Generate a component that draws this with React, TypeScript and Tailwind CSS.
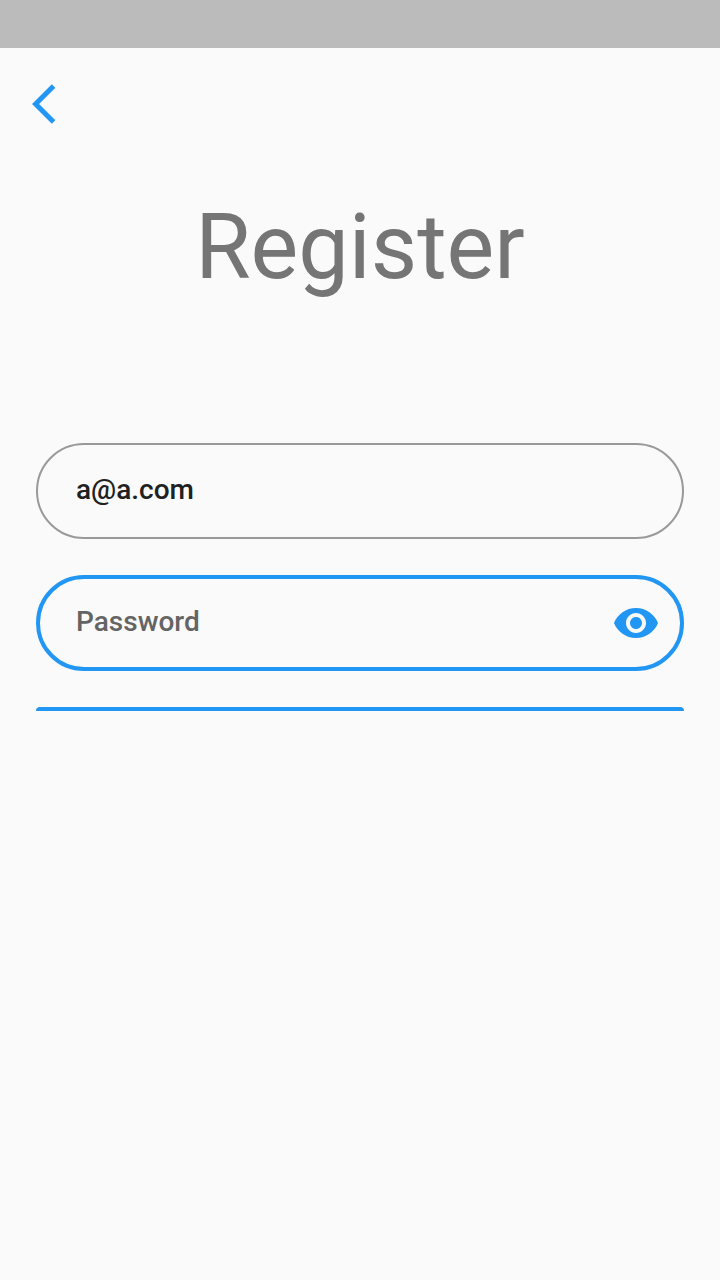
import React, { useState } from "react";

function ChevronIcon() {
  return (
    <svg viewBox="0 0 24 24" className="size-12" fill="currentColor" aria-hidden="true">
      <path d="M11.67 3.87L9.9 2.1 0 12l9.9 9.9 1.77-1.77L3.54 12z" />
    </svg>
  );
}

function EyeIcon() {
  return (
    <svg viewBox="0 0 24 24" className="size-12" fill="currentColor" aria-hidden="true">
      <path d="M12 4.5C7 4.5 2.73 7.61 1 12c1.73 4.39 6 7.5 11 7.5s9.27-3.11 11-7.5c-1.73-4.39-6-7.5-11-7.5zM12 17c-2.76 0-5-2.24-5-5s2.24-5 5-5 5 2.24 5 5-2.24 5-5 5zm0-8c-1.66 0-3 1.34-3 3s1.34 3 3 3 3-1.34 3-3-1.34-3-3-3z" />
    </svg>
  );
}

export default function App() {
  const [email, setEmail] = useState("a@a.com");
  const [password, setPassword] = useState("");
  const [visible, setVisible] = useState(false);

  return (
    <div className="min-h-screen bg-[#fafafa] font-['Roboto',sans-serif]">
      <div className="h-12 bg-[#bbbbbb]" />
      <header className="flex h-28 items-center px-8">
        <button type="button" aria-label="Back" className="text-[#2196f3]">
          <ChevronIcon />
        </button>
      </header>
      <main className="px-9 pt-[35px]">
        <h1 className="text-center text-[90px] leading-[106px] text-[#757575]">Register</h1>
        <form className="mt-[142px] flex flex-col gap-9" onSubmit={(e) => e.preventDefault()}>
          <input
            type="email"
            aria-label="Email"
            value={email}
            onChange={(e) => setEmail(e.target.value)}
            className="h-24 w-full rounded-full border-2 border-[#999999] bg-transparent px-[38px] pb-1 text-[28px] font-medium text-[#212121] outline-none"
          />
          <div className="flex h-24 items-center rounded-full border-4 border-[#2196f3] pr-5 pl-9">
            <input
              type={visible ? "text" : "password"}
              aria-label="Password"
              placeholder="Password"
              value={password}
              onChange={(e) => setPassword(e.target.value)}
              className="h-full min-w-0 flex-1 bg-transparent pb-1 text-[28px] font-medium text-[#212121] outline-none placeholder:text-[#646464]"
            />
            <button
              type="button"
              aria-label="Show password"
              onClick={() => setVisible(!visible)}
              className="text-[#2196f3]"
            >
              <EyeIcon />
            </button>
          </div>
          <button type="submit" aria-label="Register" className="h-1 w-full rounded-t bg-[#2196f3]" />
        </form>
      </main>
    </div>
  );
}
